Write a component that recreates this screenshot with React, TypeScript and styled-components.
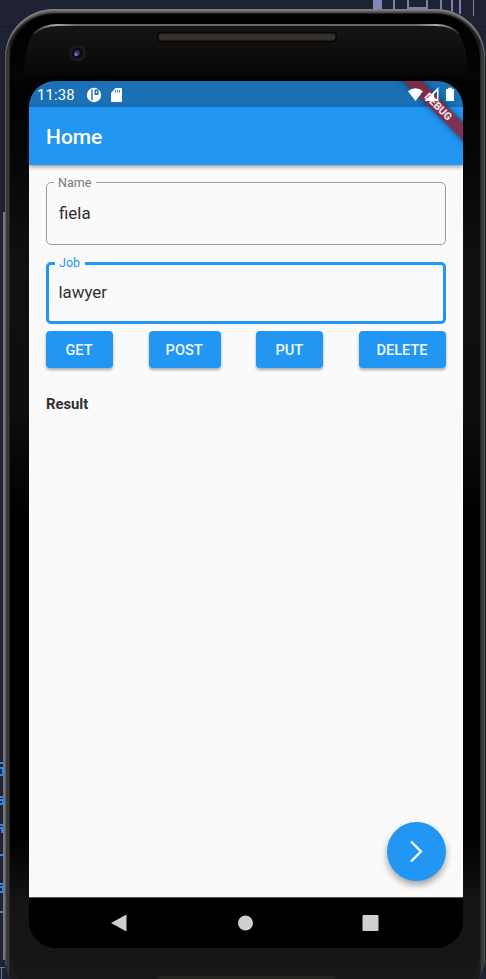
import React from 'react';
import styled, { createGlobalStyle } from 'styled-components';

const Global = createGlobalStyle`
  *, *::before, *::after { box-sizing: border-box; }
  body { margin: 0; background: #1f2233; font-family: Roboto, "Liberation Sans", sans-serif; }
`;

const Desktop = styled.main`
  position: relative;
  width: 486px;
  height: 979px;
  overflow: hidden;
  background: #1f2233;
`;

const Backdrop = styled.svg`
  position: absolute;
  inset: 0;
`;

const Phone = styled.div`
  position: relative;
  width: 480px;
  height: 990px;
  margin: 9px 0 0 5px;
  padding: 5px;
  border-radius: 49px 49px 42px 42px;
  background: linear-gradient(90deg, #666 0, #2c2c2c 2px, #424242 3px, #1c1c1c 5px, #1c1c1c 475px, #444 477px, #2c2c2c 478px, #606060 480px);
  box-shadow: inset 0 2px 1px #808080, inset 0 4px 1px #555;
`;

const Bezel = styled.div`
  width: 470px;
  height: 980px;
  padding: 67px 0 0 19px;
  border-radius: 44px 44px 40px 40px;
  background: linear-gradient(180deg, #000 0, #040404 60px, #020202 90px, #080808 160px, #101010 250px, #0d0d0d 400px, #000 500px, #000 820px, #141414 890px, #181818 980px);
`;

const GlassArt = styled.svg`
  position: absolute;
  left: 0;
  top: 0;
`;

const Screen = styled.div`
  position: relative;
  display: flex;
  flex-direction: column;
  width: 434px;
  height: 867px;
  overflow: hidden;
  border-radius: 26px 26px 27px 27px;
  background: #000;
`;

const StatusBar = styled.header`
  display: flex;
  flex: none;
  align-items: center;
  height: 26px;
  padding: 0 9px 0 8px;
  background: #1b70b6;
  color: #fff;
  font-size: 14.8px;
  letter-spacing: 0.2px;
`;

const Clock = styled.span`
  width: 49px;
  padding-top: 1px;
`;

const StatusIcons = styled.svg`
  margin-top: 1px;
`;

const SystemIcons = styled.svg`
  position: relative;
  z-index: 3;
  margin: 1px 0 0 auto;
`;

const AppBar = styled.div`
  position: relative;
  z-index: 1;
  flex: none;
  height: 58px;
  padding-left: 17px;
  background: #2196f3;
  color: #fff;
  font-size: 21px;
  font-weight: 500;
  line-height: 61px;
  box-shadow: 0 2px 4px rgba(0, 0, 0, 0.38);
`;

const DebugRibbon = styled.div`
  position: absolute;
  z-index: 2;
  left: 349.5px;
  top: 19.5px;
  width: 120px;
  height: 12.6px;
  transform: rotate(45deg);
  background: rgba(148, 28, 46, 0.8);
  box-shadow: 0 0 6px rgba(0, 0, 0, 0.5);
  color: #f3dfe4;
  font-size: 10.6px;
  font-weight: 900;
  line-height: 13px;
  text-indent: -2px;
  text-align: center;
`;

const Content = styled.section`
  flex: 1;
  padding: 17px 17px 0;
  background: #fafafa;
`;

const Field = styled.div<{ $active?: boolean }>`
  position: relative;
  display: flex;
  align-items: center;
  height: ${p => (p.$active ? 62 : 63)}px;
  margin-bottom: ${p => (p.$active ? 7 : 17)}px;
  padding-left: ${p => (p.$active ? 9.5 : 12)}px;
  padding-bottom: ${p => (p.$active ? 3 : 2)}px;
  border: ${p => (p.$active ? '3px solid #2196f3' : '1px solid #9d9d9d')};
  border-radius: 5px;
  color: #303030;
  font-size: 16.9px;
`;

const FieldLabel = styled.label<{ $active?: boolean }>`
  position: absolute;
  left: ${p => (p.$active ? 6 : 7)}px;
  top: ${p => (p.$active ? -10 : -8)}px;
  padding: 0 5px 0 4px;
  background: #fafafa;
  color: ${p => (p.$active ? '#2196f3' : '#777')};
  font-size: 12.5px;
  line-height: 15px;
`;

const Actions = styled.div`
  display: flex;
  justify-content: space-between;
`;

const Action = styled.button<{ $width: number }>`
  width: ${p => p.$width}px;
  height: 37px;
  padding: 0 1px 0 0;
  border: 0;
  border-radius: 4px;
  background: #2196f3;
  box-shadow: 0 2px 3px rgba(0, 0, 0, 0.32);
  color: #f2f8fe;
  font: 500 14.6px Roboto, sans-serif;
`;

const Result = styled.h2`
  margin: 27px 0 0;
  color: #303030;
  font-size: 14.8px;
  font-weight: 700;
  line-height: 18px;
`;

const Fab = styled.button`
  position: absolute;
  right: 17px;
  bottom: 67px;
  display: grid;
  place-items: center;
  width: 59px;
  height: 59px;
  padding: 0;
  border: 0;
  border-radius: 50%;
  background: #2196f3;
  box-shadow: 0 4px 7px rgba(0, 0, 0, 0.36);
`;

const NavBar = styled.nav`
  display: flex;
  flex: none;
  align-items: center;
  justify-content: space-between;
  height: 51px;
  padding: 0 84px 0 82px;
  border-top: 1px solid #555;
  background: #000;
`;

const actions = [
  { label: 'GET', width: 67 },
  { label: 'POST', width: 72 },
  { label: 'PUT', width: 67 },
  { label: 'DELETE', width: 87 },
];

export default function App() {
  return (
    <Desktop>
      <Global />
      <Backdrop width="486" height="979" fill="none" shapeRendering="crispEdges">
        <path d="M0 26.5H486M0 111.5H6" stroke="#191b29" />
        <path d="M373 0h9v9h-9z" fill="#8186b9" />
        <path d="M393.5 0v9M440.5 0v10M451.5 0v12M459.5 0v14" stroke="#7a7fb2" strokeWidth="2" />
        <path d="M407.5 0v7.5h19V0" stroke="#7a7fb2" strokeWidth="2" />
        <path d="M473.5 0v16" stroke="#888" />
        <path d="M4 212V960" stroke="#777" strokeWidth="2" />
        <path d="M0 763h3M0 768h3v7H0M0 797h3M0 800h3v4H0M0 825h3M0 828h2v5M0 855h3M0 884h3M0 887h3v5H0M0 912h3" stroke="#2d86ee" strokeWidth="2" />
        <path d="M0 967.5h5M1.5 968v11" stroke="#6d719d" />
      </Backdrop>
      <Phone>
        <Bezel>
          <Screen>
            <StatusBar>
              <Clock>11:38</Clock>
              <StatusIcons width="40" height="16" fill="#fff">
                <circle cx="8" cy="8" r="7.2" />
                <path d="M6 2.5v10.8M9.3 3.3h2.5v4H9.3z" stroke="#1b70b6" strokeWidth="1.4" fill="none" />
                <path d="M36 2v12q0 1-1 1H26q-1 0-1-1V6l4.5-5H35q1 0 1 1z" />
                <path d="M29.5 3v2.5M31.5 3v2.5M33.5 3v2.5" stroke="#1b70b6" strokeWidth=".9" />
              </StatusIcons>
              <SystemIcons width="46" height="16" fill="#fff">
                <path d="M0 4.2Q7.5-1.8 15 4.2L7.5 14z" />
                <path fillRule="evenodd" d="M30.5 0v14H16.5zM29 4v8h-3V7z" />
                <path d="M38 2h2V.8h4V2h2v12h-8z" />
              </SystemIcons>
            </StatusBar>
            <AppBar>Home</AppBar>
            <DebugRibbon>DEBUG</DebugRibbon>
            <Content>
              <Field><FieldLabel>Name</FieldLabel>fiela</Field>
              <Field $active><FieldLabel $active>Job</FieldLabel>lawyer</Field>
              <Actions>
                {actions.map(a => <Action key={a.label} $width={a.width}>{a.label}</Action>)}
              </Actions>
              <Result>Result</Result>
            </Content>
            <Fab aria-label="Next">
              <svg width="24" height="24" fill="none" stroke="#fff" strokeWidth="2.3"><path d="M6 1.5l10 10-10 10" /></svg>
            </Fab>
            <NavBar>
              <svg width="16" height="18" fill="#cfcfcf"><path d="M0 9L15.5.5v17z" /></svg>
              <svg width="16" height="16" fill="#cfcfcf"><circle cx="8.5" cy="8" r="7.5" /></svg>
              <svg width="17" height="16" fill="#cfcfcf"><rect x=".5" width="16" height="16" rx="1" /></svg>
            </NavBar>
          </Screen>
        </Bezel>
        <GlassArt width="480" height="72" fill="none">
          <defs>
            <linearGradient id="rim" x1="28" x2="454" y1="0" y2="0" gradientUnits="userSpaceOnUse">
              <stop stopColor="#222" /><stop offset=".05" stopColor="#aaa" /><stop offset=".1" stopColor="#686868" />
              <stop offset=".9" stopColor="#686868" /><stop offset=".95" stopColor="#aaa" /><stop offset="1" stopColor="#222" />
            </linearGradient>
            <linearGradient id="glass" x1="0" x2="0" y1="0" y2="1">
              <stop stopColor="#151515" /><stop offset=".5" stopColor="#0e0e0e" /><stop offset="1" stopColor="#030303" />
            </linearGradient>
          </defs>
          <path d="M18 72Q20 35 28 25Q38 16 53 16H431Q446 16 454 25Q462 35 464 72z" fill="url(#glass)" />
          <path d="M28 25Q38 16 53 16H431Q446 16 454 25" stroke="url(#rim)" strokeWidth="2" />
          <rect x="152.5" y="23.5" width="179" height="9" rx="4" fill="#302c27" stroke="#080808" strokeWidth="2" />
          <path d="M155 28H329" stroke="#38332d" strokeWidth="3" />
          <circle cx="72.5" cy="44" r="8.5" fill="#1b1a1d" />
          <circle cx="72.5" cy="44" r="5.5" fill="#0c0b12" />
          <circle cx="72" cy="44" r="2.8" fill="#343766" />
          <circle cx="71" cy="45.5" r="1.8" fill="#5f70cc" />
        </GlassArt>
        <BottomSpeaker />
      </Phone>
    </Desktop>
  );
}

const BottomSpeaker = styled.div`
  position: absolute;
  left: 152px;
  top: 967px;
  width: 179px;
  height: 8px;
  border-radius: 4px;
  background: #25231f;
`;
